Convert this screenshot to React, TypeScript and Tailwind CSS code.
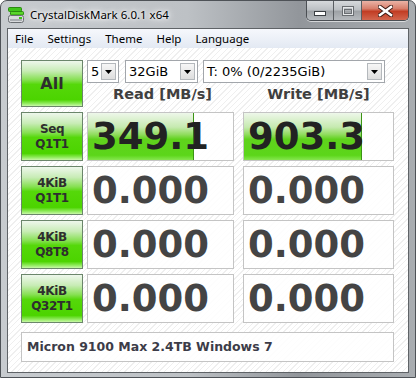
import React from "react"

const ui = "font-['Noto_Sans',sans-serif]"
const dv = "font-['DejaVu_Sans',sans-serif]"

const greenBtn =
  "bg-[linear-gradient(to_bottom,#eef7ec_0%,#c8ecb6_22%,#86e052_42%,#55d80a_52%,#4cd400_86%,#8eea5a_94%,#c8f8a8_100%)] border border-[#6b866b]"

const barFill =
  "bg-[linear-gradient(to_bottom,#eef7ea_0%,#c6eab0_30%,#8fdc5c_46%,#5fd21c_56%,#5cd61a_90%,#86e650_100%)]"

const rows = [
  { top: "Seq", bottom: "Q1T1", read: "349.1", write: "903.3", readBar: 106, writeBar: 118 },
  { top: "4KiB", bottom: "Q1T1", read: "0.000", write: "0.000", readBar: 0, writeBar: 0 },
  { top: "4KiB", bottom: "Q8T8", read: "0.000", write: "0.000", readBar: 0, writeBar: 0 },
  { top: "4KiB", bottom: "Q32T1", read: "0.000", write: "0.000", readBar: 0, writeBar: 0 },
]

function AppIcon() {
  return (
    <svg width="16" height="16" viewBox="0 0 16 16">
      <rect x="0.5" y="0.5" width="13" height="4" rx="1" fill="#3fc41a" stroke="#2a8a10" strokeWidth="1" />
      <rect x="2.5" y="4.5" width="13" height="3.5" rx="1" fill="#5ad62a" stroke="#2a8a10" strokeWidth="1" />
      <rect x="0.5" y="8.5" width="15" height="7" rx="2" fill="#d8dadc" stroke="#6a6e72" strokeWidth="1" />
      <rect x="2" y="12" width="12" height="2" fill="#a9adb1" />
      <rect x="11" y="10" width="3" height="2" fill="#3fc41a" />
    </svg>
  )
}

function Combo({ text, width }: { text: string; width: string }) {
  return (
    <div className={`${width} h-[23px] flex items-center bg-white border border-[#a2a6ab]`}>
      <span className={`${dv} flex-1 pl-[3px] text-[13px] text-black leading-none whitespace-nowrap overflow-hidden`}>
        {text}
      </span>
      <div className="w-[15px] h-[17px] mr-[2px] flex items-center justify-center border border-[#b4b8bc] bg-[linear-gradient(to_bottom,#f6f6f6,#dedede)]">
        <svg width="7" height="4" viewBox="0 0 7 4">
          <path d="M0 0 H7 L3.5 4 Z" fill="#000" />
        </svg>
      </div>
    </div>
  )
}

function Cell({ value, bar, dark }: { value: string; bar: number; dark: boolean }) {
  return (
    <div className="relative h-[49px] border border-[#c4c4c4] bg-white/85 overflow-hidden">
      {bar > 0 && (
        <div
          className={`absolute left-0 top-0 bottom-0 border-r border-[#3b9414] ${barFill}`}
          style={{ width: bar }}
        />
      )}
      <div
        className={`${dv} relative h-full flex items-center pl-[4px] text-[37px] font-bold leading-none ${
          dark ? "text-[#222222]" : "text-[#444444]"
        }`}
      >
        {value}
      </div>
    </div>
  )
}

function CaptionButtons() {
  return (
    <div className="flex h-[20px] self-start border border-t-0 border-[#4b4f54] rounded-b-[5px] overflow-hidden shadow-[0_1px_0_rgba(255,255,255,0.6)]">
      <div className="w-[27px] flex items-center justify-center border-r border-[#5a5e62] bg-[linear-gradient(to_bottom,#d6d9dc_0%,#bcc0c4_45%,#9ea2a6_55%,#b6babe_100%)]">
        <svg width="12" height="5" viewBox="0 0 12 5" className="mt-[5px]">
          <rect x="0.5" y="0.5" width="11" height="4" fill="#fff" stroke="#3a3e42" strokeWidth="1" />
        </svg>
      </div>
      <div className="w-[28px] flex items-center justify-center border-r border-[#5a5e62] bg-[linear-gradient(to_bottom,#d6d9dc_0%,#bcc0c4_45%,#9ea2a6_55%,#b6babe_100%)]">
        <svg width="12" height="10" viewBox="0 0 12 10">
          <rect x="0.5" y="0.5" width="11" height="9" fill="none" stroke="#6a6e72" strokeWidth="1" />
          <rect x="1.5" y="1.5" width="9" height="7" fill="none" stroke="#e6e8ea" strokeWidth="1" />
          <rect x="2.5" y="3.5" width="7" height="4" fill="none" stroke="#6a6e72" strokeWidth="1" />
        </svg>
      </div>
      <div className="w-[46px] flex items-center justify-center bg-[linear-gradient(to_bottom,#eab3a6_0%,#d77f6c_40%,#c23d24_55%,#d2664e_100%)]">
        <svg width="15" height="12" viewBox="0 0 15 12">
          <path d="M2 2 L13 10 M13 2 L2 10" stroke="#3b1a14" strokeWidth="4.5" strokeLinecap="square" />
          <path d="M2 2 L13 10 M13 2 L2 10" stroke="#ffffff" strokeWidth="2.6" strokeLinecap="square" />
        </svg>
      </div>
    </div>
  )
}

export default function App() {
  return (
    <div className="w-[416px] h-[378px] flex flex-col border border-[#4e5257] rounded-t-[7px] bg-[linear-gradient(to_right,#c7cbcf_0%,#bdc1c5_45%,#92969b_72%,#a9adb1_100%)] overflow-hidden">
      {/* Title bar */}
      <div className="h-[27px] flex pl-[7px] pr-[6px]">
        <div className="flex items-center gap-[6px] h-[27px]">
          <AppIcon />
          <span
            className={`${ui} text-[11.5px] text-black [text-shadow:0_0_6px_#fff,0_0_10px_#fff,0_0_3px_#fff]`}
          >
            CrystalDiskMark 6.0.1 x64
          </span>
        </div>
        <div className="ml-auto flex">
          <CaptionButtons />
        </div>
      </div>

      {/* Client */}
      <div className="flex-1 flex flex-col mx-[6px] mb-[4px] border border-[#5f6367] bg-white">
        <div
          className={`${ui} h-[19px] flex items-center gap-[14px] pl-[7px] text-[11.5px] text-black bg-[linear-gradient(to_bottom,#f6f8fc,#e3e9f3)]`}
        >
          <span>File</span>
          <span>Settings</span>
          <span>Theme</span>
          <span>Help</span>
          <span>Language</span>
        </div>

        <div className="flex-1 pt-[12px] pl-[13px] pr-[14px] pb-[10px] flex flex-col bg-[repeating-linear-gradient(135deg,#ffffff_0px,#ffffff_3px,#efefef_3px,#efefef_4px)]">
          <div className="grid grid-cols-[62px_151px_151px] gap-y-[5px]">
            {/* Top row */}
            <div className={`${greenBtn} h-[47px] flex items-center justify-center`}>
              <span className={`${dv} text-[16px] font-bold text-[#2e2e2e]`}>All</span>
            </div>
            <div className="col-span-2 ml-[4px] flex flex-col">
              <div className="flex gap-[6px]">
                <Combo text="5" width="w-[35px]" />
                <Combo text="32GiB" width="w-[80px]" />
                <div className="ml-[-1px]">
                  <Combo text="T: 0% (0/2235GiB)" width="w-[182px]" />
                </div>
              </div>
              <div className={`${dv} flex-1 grid grid-cols-[151px_151px] gap-x-[5px] items-center text-[14.5px] font-bold text-[#3f3f3f]`}>
                <div className="text-center">Read [MB/s]</div>
                <div className="text-center">Write [MB/s]</div>
              </div>
            </div>

            {rows.map((r, i) => (
              <React.Fragment key={i}>
                <div
                  className={`${greenBtn} h-[49px] flex flex-col items-center justify-center ${dv} text-[12px] tracking-[-0.4px] font-bold text-[#2e2e2e] leading-[15px]`}
                >
                  <span>{r.top}</span>
                  <span>{r.bottom}</span>
                </div>
                <div className="ml-[4px]">
                  <Cell value={r.read} bar={r.readBar} dark={i === 0} />
                </div>
                <div className="ml-[9px] w-[151px] -mr-[4px]">
                  <Cell value={r.write} bar={r.writeBar} dark={i === 0} />
                </div>
              </React.Fragment>
            ))}
          </div>

          <div className="mt-[9px] h-[30px] flex items-center border border-[#c4c4c4] bg-white/85 pl-[5px]">
            <span className={`${dv} text-[12.5px] font-bold text-[#3c3c48]`}>
              Micron 9100 Max 2.4TB Windows 7
            </span>
          </div>
        </div>
      </div>
    </div>
  )
}
